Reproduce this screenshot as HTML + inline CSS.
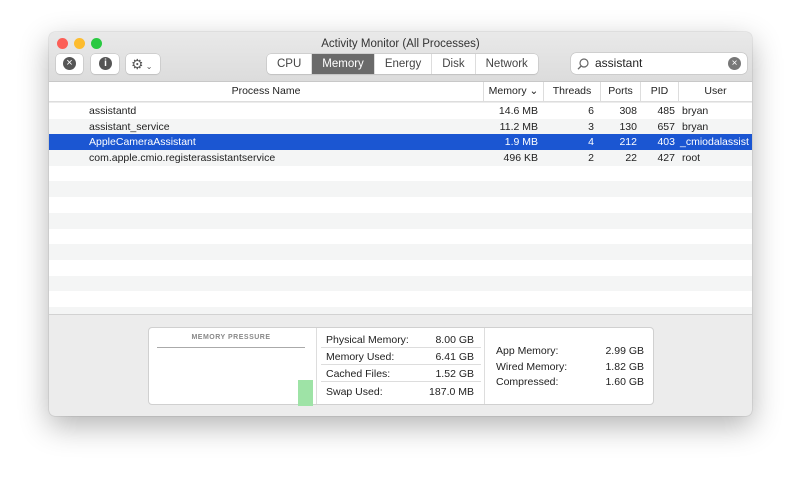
<!DOCTYPE html><html><head><style>
*{margin:0;padding:0;box-sizing:border-box}
body{width:800px;height:481px;background:#fff;font-family:"Liberation Sans",sans-serif;font-size:10.5px;color:#222;position:relative;overflow:hidden}
.win{position:absolute;left:49px;top:32px;width:703px;height:384px;border-radius:6px;background:#ececec;box-shadow:0 10px 30px rgba(0,0,0,.3),0 0 1px rgba(0,0,0,.4);overflow:hidden}
.tb{position:absolute;left:0;top:0;width:100%;height:50px;background:linear-gradient(#e9e9e9,#dcdcdc);border-bottom:1px solid #c8c8c8}
.dot{position:absolute;top:6px;width:11px;height:11px;border-radius:50%}
.title{position:absolute;top:5px;left:0;width:100%;text-align:center;font-size:11.5px;color:#333}
.btn{position:absolute;top:22px;height:20px;background:#fff;border-radius:4px;box-shadow:0 0 0 .5px #bbb,0 1px 1px rgba(0,0,0,.1)}
.seg{position:absolute;left:218px;top:22px;height:20px;display:flex;border-radius:4px;background:#fff;box-shadow:0 0 0 .5px #bbb,0 1px 1px rgba(0,0,0,.1);overflow:hidden}
.seg div{padding:0 10px;line-height:20px;font-size:11.5px;color:#444;border-right:1px solid #ddd}
.seg .on{background:#6a6a6a;color:#fff}
.search{position:absolute;left:522px;top:21px;width:176px;height:21px;background:#fff;border-radius:5px;box-shadow:0 0 0 .5px #bbb;font-size:12px;line-height:21px;padding-left:24px}
.hdr{position:absolute;top:50px;left:0;width:100%;height:20px;background:#fff;border-bottom:1px solid #ddd;font-size:10.5px;line-height:19px}
.hdr span{position:absolute;top:0;height:19px;text-align:center;border-left:1px solid #ddd}
.rows{position:absolute;top:71px;left:0;width:100%;height:211px;background:#fff;overflow:hidden}
.r{height:15.7px;line-height:16px;position:relative}
.r:nth-child(even){background:#f4f5f5}
.r span{position:absolute;top:0}
.sel{background:#1b56d2!important;color:#fff}
.bot{position:absolute;top:282px;left:0;width:100%;height:102px;border-top:1px solid #d2d2d2}
.box{position:absolute;left:99px;top:12px;width:506px;height:78px;background:#fff;border:1px solid #d0d0d0;border-radius:4px}
.kv{position:absolute;font-size:10.5px}
</style></head><body>
<div class="win">
<div class="tb">
<div class="dot" style="left:8px;background:#fc5f57"></div>
<div class="dot" style="left:25px;background:#fdbc2e"></div>
<div class="dot" style="left:42px;background:#29c941"></div>
<div class="title" style="top:6px">Activity Monitor (All Processes)</div>
<div class="btn" style="left:7px;width:27px"><div style="position:absolute;left:7px;top:3px;width:13px;height:13px;border-radius:50%;background:#555;color:#fff;font-size:11px;line-height:13px;text-align:center">×</div></div>
<div class="btn" style="left:42px;width:28px"><div style="position:absolute;left:8px;top:3px;width:13px;height:13px;border-radius:50%;background:#555;color:#fff;font-size:10px;font-weight:bold;line-height:13px;text-align:center">i</div></div>
<div class="btn" style="left:77px;width:34px;color:#555;font-size:14px;line-height:20px;padding-left:5px">⚙<span style="font-size:8px"> ⌄</span></div>
<div class="seg"><div>CPU</div><div class="on">Memory</div><div>Energy</div><div>Disk</div><div style="border:0">Network</div></div>
<div class="search"><svg style="position:absolute;left:6px;top:5px" width="12" height="12" viewBox="0 0 12 12"><circle cx="7" cy="5" r="4" fill="none" stroke="#666" stroke-width="1.2"/><line x1="4.2" y1="8" x2="1" y2="11.2" stroke="#666" stroke-width="1.3"/></svg>assistant<div style="position:absolute;right:6px;top:4px;width:13px;height:13px;border-radius:50%;background:#777;color:#fff;font-size:10px;line-height:13px;text-align:center">×</div></div>
</div>
<div class="hdr">
<span style="left:0;width:434px;border:0">Process Name</span>
<span style="left:434px;width:60px">Memory ⌄</span>
<span style="left:494px;width:57px">Threads</span>
<span style="left:551px;width:40px">Ports</span>
<span style="left:591px;width:38px">PID</span>
<span style="left:629px;width:74px">User</span>
</div>
<div class="rows">
<div class="r"><span style="left:40px">assistantd</span><span style="right:214px">14.6 MB</span><span style="right:158px">6</span><span style="right:115px">308</span><span style="right:77px">485</span><span style="left:633px">bryan</span></div>
<div class="r"><span style="left:40px">assistant_service</span><span style="right:214px">11.2 MB</span><span style="right:158px">3</span><span style="right:115px">130</span><span style="right:77px">657</span><span style="left:633px">bryan</span></div>
<div class="r sel"><span style="left:40px">AppleCameraAssistant</span><span style="right:214px">1.9 MB</span><span style="right:158px">4</span><span style="right:115px">212</span><span style="right:77px">403</span><span style="left:631px">_cmiodalassist</span></div>
<div class="r"><span style="left:40px">com.apple.cmio.registerassistantservice</span><span style="right:214px">496 KB</span><span style="right:158px">2</span><span style="right:115px">22</span><span style="right:77px">427</span><span style="left:633px">root</span></div>
<div class="r"></div><div class="r"></div><div class="r"></div><div class="r"></div><div class="r"></div><div class="r"></div><div class="r"></div><div class="r"></div><div class="r"></div><div class="r"></div>
</div>
<div class="bot">
<div class="box">
<div style="position:absolute;left:8px;top:6px;width:148px;text-align:center;font-size:7px;letter-spacing:.5px;color:#888;font-weight:bold">MEMORY PRESSURE</div>
<div style="position:absolute;left:8px;top:19px;width:148px;border-top:1px solid #aaa"></div>
<div style="position:absolute;left:149px;top:52px;width:15px;height:26px;background:#9ee3a6"></div>
<div style="position:absolute;left:167px;top:0;width:1px;height:76px;background:#ddd"></div>
<div style="position:absolute;left:335px;top:0;width:1px;height:76px;background:#ddd"></div>
<div class="kv" style="left:177px;top:6px">Physical Memory:</div><div class="kv" style="left:280px;top:6px;width:45px;text-align:right">8.00 GB</div>
<div style="position:absolute;left:172px;top:19px;width:160px;border-top:1px solid #ddd"></div>
<div class="kv" style="left:177px;top:23px">Memory Used:</div><div class="kv" style="left:280px;top:23px;width:45px;text-align:right">6.41 GB</div>
<div style="position:absolute;left:172px;top:36px;width:160px;border-top:1px solid #ddd"></div>
<div class="kv" style="left:177px;top:40px">Cached Files:</div><div class="kv" style="left:280px;top:40px;width:45px;text-align:right">1.52 GB</div>
<div style="position:absolute;left:172px;top:53px;width:160px;border-top:1px solid #ddd"></div>
<div class="kv" style="left:177px;top:58px">Swap Used:</div><div class="kv" style="left:270px;top:58px;width:55px;text-align:right">187.0 MB</div>
<div class="kv" style="left:347px;top:17px">App Memory:</div><div class="kv" style="left:445px;top:17px;width:50px;text-align:right">2.99 GB</div>
<div class="kv" style="left:347px;top:33px">Wired Memory:</div><div class="kv" style="left:445px;top:33px;width:50px;text-align:right">1.82 GB</div>
<div class="kv" style="left:347px;top:48px">Compressed:</div><div class="kv" style="left:445px;top:48px;width:50px;text-align:right">1.60 GB</div>
</div>
</div>
</div>
</body></html>
